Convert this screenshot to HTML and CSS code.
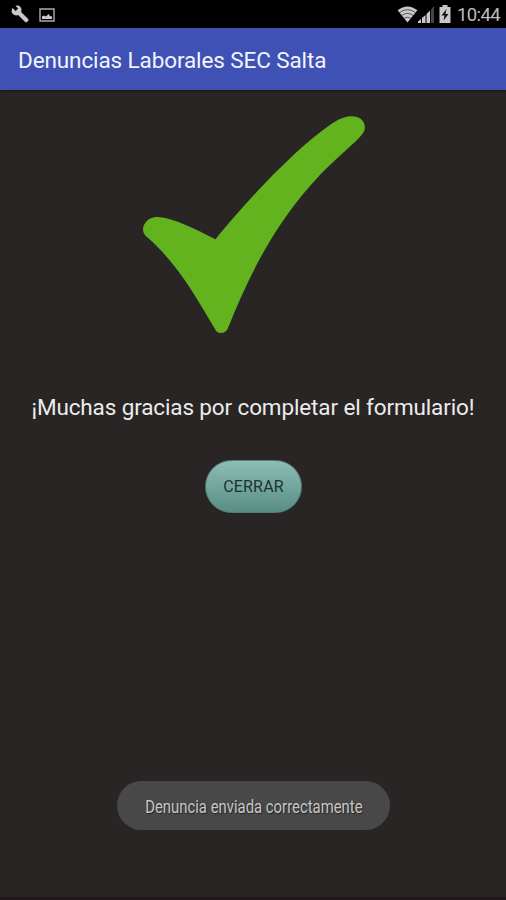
FILE: index.html
```html
<!DOCTYPE html>
<html lang="es">
<head>
<meta charset="utf-8">
<title>Denuncias Laborales SEC Salta</title>
<link rel="stylesheet" href="styles.css">
</head>
<body>
<div class="screen">
  <div class="status">
    <svg class="wrench" viewBox="0 0 20 20"><path d="M2.2 3.2 5.4 6.2 8 3.8 5.2.9C7.5.1 9.600.7 10.800 2.500 11.800 4 11.800 5.800 11.200 7.400L18.600 14.800C19.200 15.500 19.100 16.300 18.500 16.900L17.400 18C16.800 18.600 16 18.600 15.400 18L8 10.600C6.100 11.400 4 11 2.500 9.600.900 8 .700 5.400 2.200 3.200Z"/></svg>
    <svg class="photo" viewBox="0 0 16 14"><path class="frame" d="M1 1H15V13H1Z"/><path d="M3 11V8.500L5 7.500 7 8.500 9.500 6 11 8 13 8.500V11Z"/></svg>
    <svg class="wifi" viewBox="0 0 22 18"><path d="M.5 4.500Q11-3.500 21.500 4.500L11 17.500Z"/><path class="gap" d="M2.500 7Q11 .8 19.500 7M5 10Q11 5.600 17 10M7.500 13Q11 10.600 14.500 13"/></svg>
    <svg class="signal" viewBox="0 0 17 17"><path class="dim" d="M13 3.500 16 0V17H13Z"/><path d="M0 17V15.500L3 13V17ZM4 17V12L7.500 9V17ZM8.500 17V8L12 4.500V17Z"/></svg>
    <svg class="battery" viewBox="0 0 12 18"><path d="M3.500 0H8.500V2H11.500V18H.5V2H3.500Z"/><path class="bolt" d="M7.500 4 2.500 10.500H5.500L4.500 15.500 9.500 9H6.500Z"/></svg>
    <span class="clock">10:44</span>
  </div>
  <header class="bar"><h1>Denuncias Laborales SEC Salta</h1></header>
  <main class="content">
    <svg class="check" viewBox="142 116 222 218"><path d="M147 237C143 234 142 229 144 225C147 219 152 217 158 217C174 218 195 229 215.500 239.300C248 199 302 142 336 121C343 117 351 115 357 117C364 119 367 127 363 133C358 141 338 156 319 176C277 221 251 270 228 328C226 334 217 335 215 329C196 297 177 263 147 237Z"/></svg>
    <p class="thanks">¡Muchas gracias por completar el formulario!</p>
    <button class="close">CERRAR</button>
    <div class="toast"><span>Denuncia enviada correctamente</span></div>
  </main>
</div>
</body>
</html>
```
FILE: styles.css
```css
* { box-sizing: border-box; }
body { margin: 0; font-family: Roboto, "Liberation Sans", sans-serif; }
.screen {
  width: 506px; height: 900px; overflow: hidden;
  display: flex; flex-direction: column;
  background: #292525;
}
.status {
  height: 28px; flex: none;
  display: flex; align-items: flex-start;
  padding: 5px 6px 0 10px;
  background: #000; color: #bdbdbd;
}
.status svg { fill: #c8c8c8; flex: none; }
.wrench { width: 20px; height: 19px; }
.photo { width: 16px; height: 14px; margin: 3px 0 0 9px; }
.photo .frame { fill: none; stroke: #aaa; stroke-width: 1.4; }
.wifi { width: 21px; height: 17px; margin-left: auto; margin-top: 1px; }
.wifi .gap { fill: none; stroke: #000; stroke-width: 0.6; }
.signal { width: 17px; height: 17px; margin-top: 1px; margin-right: 4px; }
.signal .dim { fill: #444; }
.battery { width: 12px; height: 18px; margin-right: 6px; }
.battery .bolt { fill: #111; }
.clock { font-size: 18.5px; line-height: 20px; width: 43px; white-space: nowrap; letter-spacing: -0.6px; }
.bar {
  height: 62px; flex: none;
  display: flex; align-items: center;
  padding: 1px 18px 0;
  background: #3f51b5;
  box-shadow: 0 1px 2px #171414;
}
h1 { margin: 0; font-size: 22.5px; font-weight: 400; letter-spacing: -0.11px; color: #f2f4ff; white-space: nowrap; }
.content {
  flex: 1; display: flex; flex-direction: column; align-items: center;
  padding-top: 26px;
  border-bottom: 3px solid #211a1c;
}
.check { width: 222px; height: 218px; overflow: visible; fill: #63b31e; }
.thanks {
  margin: 59px 0 0; font-size: 22.5px; line-height: 28px;
  letter-spacing: -0.13px;
  color: #ececec; white-space: nowrap;
}
.close {
  width: 97px; height: 53px; margin-top: 39px; padding: 0 0 0 1px;
  border: 1px solid #527f77; border-radius: 27px;
  background: linear-gradient(#8dbdb5, #598e84);
  font: 400 16px Roboto, sans-serif; letter-spacing: 0.2px; color: #1c332f;
}
.toast {
  width: 273px; height: 49px; margin-top: 268px;
  display: flex; align-items: center; justify-content: center;
  border-radius: 25px; background: #484848;
  font-size: 17.5px; color: #c6c6c6; white-space: nowrap;
  padding: 3px 0 0 2px;
  text-shadow: 1px 1px 1px #222;
}
.toast span { transform: scaleX(0.85); }
```
